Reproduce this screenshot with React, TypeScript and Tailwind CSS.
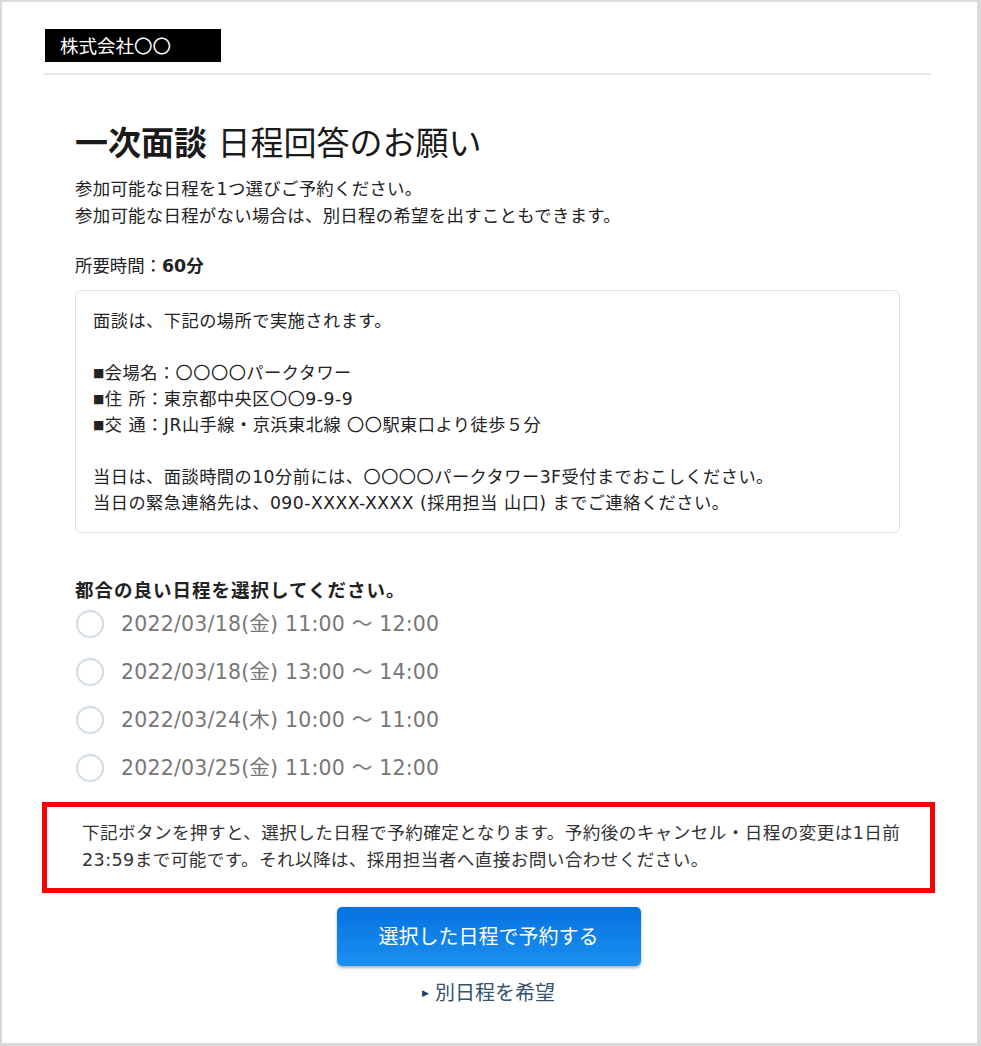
import React from "react";

const jp = {
  fontFamily: '"DejaVu Sans", "Noto Sans CJK JP", sans-serif',
};

const cjk = {
  fontFamily: '"Noto Sans CJK JP", "Noto Sans", sans-serif',
};

const slots = [
  "2022/03/18(金) 11:00 ～ 12:00",
  "2022/03/18(金) 13:00 ～ 14:00",
  "2022/03/24(木) 10:00 ～ 11:00",
  "2022/03/25(金) 11:00 ～ 12:00",
];

export default function App() {
  return (
    <div
      style={jp}
      className="w-[981px] h-[1046px] bg-white border-[#d9d9d9] border-t-2 border-l-2 border-r-4 border-b-[3px] text-[#222]"
    >
      {/* company header */}
      <div className="pt-[27px] ml-[43px]">
        <div
          style={cjk}
          className="w-[176px] h-[33px] bg-black text-white text-[18.5px] leading-[33px] pl-[15px]"
        >
          株式会社〇〇
        </div>
      </div>
      <div className="mt-[11px] ml-[42px] w-[887px] h-[2px] bg-[#e6e6e6]" />

      {/* main column */}
      <div className="ml-[73px] w-[825px]">
        <h1 className="mt-[49px] text-[33px] leading-[40px] text-[#1a1a1a] whitespace-nowrap">
          <span className="font-bold">一次面談</span> 日程回答のお願い
        </h1>
        <p className="mt-[12px] text-[17.4px] leading-[27px] tracking-[0.3px] whitespace-nowrap">
          参加可能な日程を1つ選びご予約ください。
          <br />
          参加可能な日程がない場合は、別日程の希望を出すこともできます。
        </p>
        <p className="mt-[23px] text-[17.4px] leading-[27px]">
          所要時間：<span className="font-bold">60分</span>
        </p>

        <div className="mt-[10px] border border-[#e2e2e2] rounded-md pl-[17px] pt-[17px] pb-[16px] text-[17.2px] leading-[26px] tracking-[0.5px] whitespace-nowrap">
          <p>面談は、下記の場所で実施されます。</p>
          <p>&nbsp;</p>
          <p>
            <span className="text-[12px] align-[2px]">■</span>会場名：〇〇〇〇パークタワー
          </p>
          <p>
            <span className="text-[12px] align-[2px]">■</span>住 所：東京都中央区〇〇9-9-9
          </p>
          <p>
            <span className="text-[12px] align-[2px]">■</span>交 通：JR山手線・京浜東北線 〇〇駅東口より徒歩５分
          </p>
          <p>&nbsp;</p>
          <p>当日は、面談時間の10分前には、〇〇〇〇パークタワー3F受付までおこしください。</p>
          <p>当日の緊急連絡先は、090-XXXX-XXXX (採用担当 山口) までご連絡ください。</p>
        </div>

        <p className="mt-[46px] text-[18.5px] leading-[24px] font-bold tracking-[1px] whitespace-nowrap">
          都合の良い日程を選択してください。
        </p>
        <div className="mt-[1px] flex flex-col gap-[8px]">
          {slots.map((s) => (
            <label key={s} className="h-[40px] flex items-center gap-[17px] cursor-pointer">
              <span className="ml-[1px] w-[28px] h-[28px] rounded-full border-2 border-[#d3dce4] bg-white shrink-0" />
              <span className="text-[20.5px] tracking-[0.2px] text-[#777] whitespace-nowrap">{s}</span>
            </label>
          ))}
        </div>
      </div>

      {/* notice + actions */}
      <div className="ml-[40px] w-[893px]">
        <div className="mt-[14px] border-[5px] border-[#ff0000] pl-[35px] pt-[13px] pb-[14px] text-[17.6px] leading-[27px] tracking-[0.4px] text-[#333] whitespace-nowrap">
          下記ボタンを押すと、選択した日程で予約確定となります。予約後のキャンセル・日程の変更は1日前
          <br />
          23:59まで可能です。それ以降は、採用担当者へ直接お問い合わせください。
        </div>
        <div className="mt-[14px] flex justify-center">
          <button className="w-[304px] h-[59px] rounded-[5px] bg-gradient-to-b from-[#0672e0] to-[#1b8ff1] text-white text-[20px] shadow-[0_2px_3px_rgba(0,0,0,0.3)]">
            選択した日程で予約する
          </button>
        </div>
        <div className="mt-[13px] flex justify-center items-center text-[20px] leading-[28px] text-[#34536f]">
          <span className="text-[9px] text-[#1e3d5c] mr-[6px]">▶</span>
          別日程を希望
        </div>
      </div>
    </div>
  );
}
